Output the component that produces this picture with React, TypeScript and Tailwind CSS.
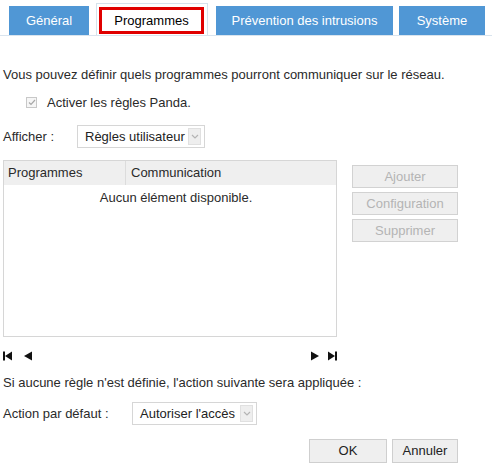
import React from 'react';

const font = { fontFamily: '"Liberation Sans", Arial, sans-serif' };

const Chevron = () => (
  <svg width="8" height="5" viewBox="0 0 8 5">
    <path d="M1 1 L4 4 L7 1" fill="none" stroke="#b4b4b4" strokeWidth="1.2" />
  </svg>
);

const FakeSelect: React.FC<{ label: string; width: string }> = ({ label, width }) => (
  <div className={`flex h-[23px] items-center border border-[#d6d6d6] bg-white pl-[7px] pr-[3px] ${width}`}>
    <span className="flex-1 text-[13px] text-[#222]">{label}</span>
    <span className="flex h-[17px] w-[13px] items-center justify-center border border-[#e0e0e0] bg-[#eeeeee]">
      <Chevron />
    </span>
  </div>
);

const SideButton: React.FC<{ label: string }> = ({ label }) => (
  <div className="flex h-[23px] w-[106px] items-center justify-center border border-[#d2d2d2] bg-[#efefef] text-[13px] text-[#b4b4b4]">
    {label}
  </div>
);

const NavIcon: React.FC<{ kind: 'first' | 'prev' | 'next' | 'last' }> = ({ kind }) => (
  <svg width="10" height="10" viewBox="0 0 10 10">
    {kind === 'first' && (
      <>
        <rect x="0" y="0.5" width="2" height="9" fill="#111" />
        <path d="M2 5 L9 0.5 L9 9.5 Z" fill="#111" />
      </>
    )}
    {kind === 'prev' && <path d="M1 5 L9 0.5 L9 9.5 Z" fill="#111" />}
    {kind === 'next' && <path d="M9 5 L1 0.5 L1 9.5 Z" fill="#111" />}
    {kind === 'last' && (
      <>
        <path d="M8 5 L1 0.5 L1 9.5 Z" fill="#111" />
        <rect x="8" y="0.5" width="2" height="9" fill="#111" />
      </>
    )}
  </svg>
);

export default function App() {
  return (
    <div className="h-[472px] w-[492px] overflow-hidden bg-white text-[13px] text-[#2a2a2a]" style={font}>
      {/* tabs */}
      <div className="flex items-end border-b border-[#d9e4ee] pl-[9px] pt-[3px]">
        <div className="flex h-[29px] w-[80px] items-center justify-center bg-[#5097d5] text-white">Général</div>
        <div className="ml-[7px] flex h-[32px] w-[112px] items-stretch border border-b-0 border-[#d6e2ec] bg-white pb-[1px] pl-[2px] pr-[3px] pt-[3px]">
          <div className="flex flex-1 items-center justify-center border-[3px] border-[#e00000] text-black">Programmes</div>
        </div>
        <div className="ml-[8px] flex h-[29px] w-[177px] items-center justify-center bg-[#5097d5] text-white">
          Prévention des intrusions
        </div>
        <div className="ml-[6px] flex h-[29px] w-[86px] items-center justify-center bg-[#5097d5] text-white">Système</div>
      </div>

      <div className="pl-[3px]">
        <p className="mt-[31px] leading-[15px]">Vous pouvez définir quels programmes pourront communiquer sur le réseau.</p>

        <div className="mt-[13px] flex items-center pl-[23px]">
          <span className="flex h-[11px] w-[11px] items-center justify-center border border-[#c8c8c8] bg-[#f6f6f6]">
            <svg width="8" height="7" viewBox="0 0 8 7">
              <path d="M1 3.5 L3 5.5 L7 1" fill="none" stroke="#a8a8a8" strokeWidth="1.2" />
            </svg>
          </span>
          <span className="ml-[10px] leading-[15px]">Activer les règles Panda.</span>
        </div>

        <div className="mt-[15px] flex items-center">
          <span className="w-[74px]">Afficher :</span>
          <FakeSelect label="Règles utilisateur" width="w-[128px]" />
        </div>

        <div className="mt-[12px] flex items-start">
          <div className="flex h-[177px] w-[334px] flex-col border border-[#d6d6d6]">
            <div className="flex h-[24px] bg-[#efefef]">
              <div className="flex w-[122px] items-center border-r border-[#dcdcdc] pl-[4px]">Programmes</div>
              <div className="flex flex-1 items-center pl-[5px]">Communication</div>
            </div>
            <div className="mt-[5px] pl-[12px] text-center leading-[15px]">Aucun élément disponible.</div>
          </div>
          <div className="ml-[15px] mt-[5px] flex flex-col gap-[4px]">
            <SideButton label="Ajouter" />
            <SideButton label="Configuration" />
            <SideButton label="Supprimer" />
          </div>
        </div>

        <div className="mt-[14px] flex h-[10px] w-[334px] items-center">
          <NavIcon kind="first" />
          <span className="ml-[10px]"><NavIcon kind="prev" /></span>
          <span className="ml-auto"><NavIcon kind="next" /></span>
          <span className="ml-[7px]"><NavIcon kind="last" /></span>
        </div>

        <p className="mt-[14px] leading-[15px]">Si aucune règle n'est définie, l'action suivante sera appliquée :</p>

        <div className="mt-[12px] flex items-center">
          <span className="w-[129px]">Action par défaut :</span>
          <FakeSelect label="Autoriser l'accès" width="w-[125px]" />
        </div>

        <div className="mt-[14px] flex justify-end gap-[5px] pr-[34px]">
          <div className="flex h-[24px] w-[78px] items-center justify-center border border-[#cfcfcf] bg-[#efefef] text-[#222]">OK</div>
          <div className="flex h-[24px] w-[66px] items-center justify-center border border-[#cfcfcf] bg-[#efefef] text-[#222]">Annuler</div>
        </div>
      </div>
    </div>
  );
}
